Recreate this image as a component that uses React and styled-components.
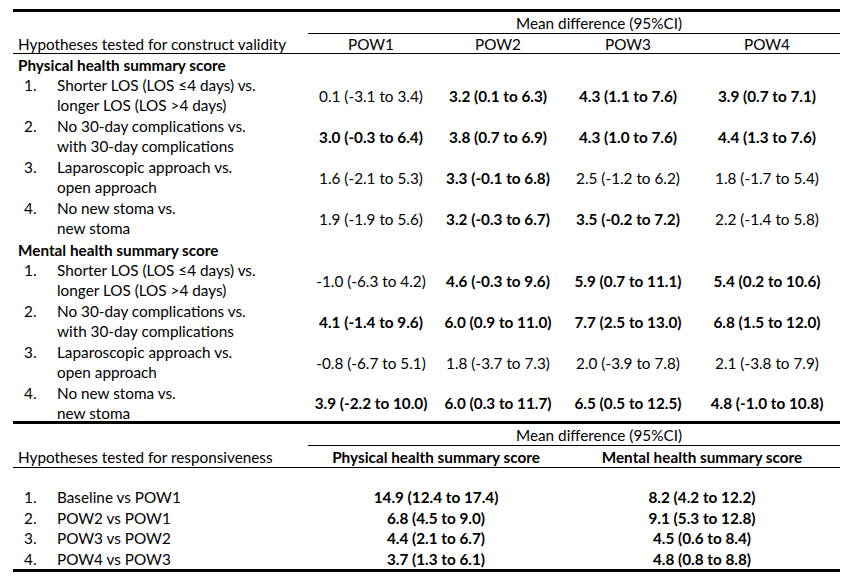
import React from "react";
import styled, { createGlobalStyle } from "styled-components";

const GlobalStyle = createGlobalStyle`
  html, body {
    margin: 0;
    padding: 0;
    background: #fff;
  }
  body {
    font-family: Lato, "Open Sans", sans-serif;
    font-size: 15.3px;
    color: #000;
  }
`;

const Page = styled.div`
  padding: 9px 20px 0 13px;
  width: 827px;
`;

const Section = styled.section`
  border-top: 3px solid #000;
  border-bottom: ${(p) => (p.$last ? "3px solid #000" : "none")};
`;

const Row = styled.div`
  display: grid;
  grid-template-columns: ${(p) => p.$cols};
  height: ${(p) => p.$h || 20}px;
  box-sizing: border-box;
  border-bottom: ${(p) => (p.$rule ? "1px solid #000" : "none")};
`;

const Cell = styled.div`
  display: flex;
  align-items: ${(p) => (p.$top ? "flex-start" : "center")};
  justify-content: ${(p) => (p.$left ? "flex-start" : "center")};
  padding-left: ${(p) => p.$pad || 0}px;
  grid-column: span ${(p) => p.$span || 1};
  box-sizing: border-box;
  line-height: 20px;
  white-space: nowrap;
  font-weight: ${(p) => (p.$bold ? 700 : 400)};
  border-bottom: ${(p) => (p.$rule ? "1px solid #000" : "none")};
`;

const Num = styled.span`
  width: 33px;
  flex: none;
`;

const Lines = styled.span`
  display: flex;
  flex-direction: column;
`;

const COLS_A = "295px 126px 128px 132px 146px";
const COLS_B = "295px 256px 276px";

const construct = [
  {
    title: "Physical health summary score",
    rows: [
      ["Shorter LOS (LOS \u22644 days) vs.", "longer LOS (LOS >4 days)", [
        ["0.1 (-3.1 to 3.4)", 0], ["3.2 (0.1 to 6.3)", 1], ["4.3 (1.1 to 7.6)", 1], ["3.9 (0.7 to 7.1)", 1]]],
      ["No 30-day complications vs.", "with 30-day complications", [
        ["3.0 (-0.3 to 6.4)", 1], ["3.8 (0.7 to 6.9)", 1], ["4.3 (1.0 to 7.6)", 1], ["4.4 (1.3 to 7.6)", 1]]],
      ["Laparoscopic approach vs.", "open approach", [
        ["1.6 (-2.1 to 5.3)", 0], ["3.3 (-0.1 to 6.8)", 1], ["2.5 (-1.2 to 6.2)", 0], ["1.8 (-1.7 to 5.4)", 0]]],
      ["No new stoma vs.", "new stoma", [
        ["1.9 (-1.9 to 5.6)", 0], ["3.2 (-0.3 to 6.7)", 1], ["3.5 (-0.2 to 7.2)", 1], ["2.2 (-1.4 to 5.8)", 0]]],
    ],
  },
  {
    title: "Mental health summary score",
    rows: [
      ["Shorter LOS (LOS \u22644 days) vs.", "longer LOS (LOS >4 days)", [
        ["-1.0 (-6.3 to 4.2)", 0], ["4.6 (-0.3 to 9.6)", 1], ["5.9 (0.7 to 11.1)", 1], ["5.4 (0.2 to 10.6)", 1]]],
      ["No 30-day complications vs.", "with 30-day complications", [
        ["4.1 (-1.4 to 9.6)", 1], ["6.0 (0.9 to 11.0)", 1], ["7.7 (2.5 to 13.0)", 1], ["6.8 (1.5 to 12.0)", 1]]],
      ["Laparoscopic approach vs.", "open approach", [
        ["-0.8 (-6.7 to 5.1)", 0], ["1.8 (-3.7 to 7.3)", 0], ["2.0 (-3.9 to 7.8)", 0], ["2.1 (-3.8 to 7.9)", 0]]],
      ["No new stoma vs.", "new stoma", [
        ["3.9 (-2.2 to 10.0)", 1], ["6.0 (0.3 to 11.7)", 1], ["6.5 (0.5 to 12.5)", 1], ["4.8 (-1.0 to 10.8)", 1]]],
    ],
  },
];

const responsiveness = [
  ["Baseline vs POW1", "14.9 (12.4 to 17.4)", "8.2 (4.2 to 12.2)"],
  ["POW2 vs POW1", "6.8 (4.5 to 9.0)", "9.1 (5.3 to 12.8)"],
  ["POW3 vs POW2", "4.4 (2.1 to 6.7)", "4.5 (0.6 to 8.4)"],
  ["POW4 vs POW3", "3.7 (1.3 to 6.1)", "4.8 (0.8 to 8.8)"],
];

const ConstructTable = () => (
  <Section>
    <Row $cols={COLS_A} $h={22}>
      <Cell />
      <Cell $span={4} $rule $pad={50}>
        Mean difference (95%CI)
      </Cell>
    </Row>
    <Row $cols={COLS_A} $h={20} $rule>
      <Cell $left $pad={5}>
        Hypotheses tested for construct validity
      </Cell>
      {["POW1", "POW2", "POW3", "POW4"].map((p) => (
        <Cell key={p}>{p}</Cell>
      ))}
    </Row>
    {construct.map((group, g) => (
      <React.Fragment key={group.title}>
        <Row $cols={COLS_A} $h={21}>
          <Cell $span={5} $left $pad={5} $bold>
            {group.title}
          </Cell>
        </Row>
        {group.rows.map(([a, b, vals], i) => (
          <Row key={a + i} $cols={COLS_A} $h={g === 1 && i === 3 ? 38 : 41}>
            <Cell $left $top $pad={11}>
              <Num>{i + 1}.</Num>
              <Lines>
                <span>{a}</span>
                <span>{b}</span>
              </Lines>
            </Cell>
            {vals.map(([v, bold], j) => (
              <Cell key={j} $bold={bold}>
                {v}
              </Cell>
            ))}
          </Row>
        ))}
      </React.Fragment>
    ))}
  </Section>
);

const ResponsivenessTable = () => (
  <Section $last>
    <Row $cols={COLS_B} $h={22}>
      <Cell />
      <Cell $span={2} $rule $pad={50}>
        Mean difference (95%CI)
      </Cell>
    </Row>
    <Row $cols={COLS_B} $h={22} $rule>
      <Cell $left $pad={5}>
        Hypotheses tested for responsiveness
      </Cell>
      <Cell $bold>Physical health summary score</Cell>
      <Cell $bold>Mental health summary score</Cell>
    </Row>
    <Row $cols={COLS_B} $h={19} />
    {responsiveness.map(([label, phys, ment], i) => (
      <Row key={label} $cols={COLS_B} $h={20.5}>
        <Cell $left $pad={11}>
          <Num>{i + 1}.</Num>
          <span>{label}</span>
        </Cell>
        <Cell $bold>{phys}</Cell>
        <Cell $bold>{ment}</Cell>
      </Row>
    ))}
  </Section>
);

export default function App() {
  return (
    <>
      <GlobalStyle />
      <Page>
        <ConstructTable />
        <ResponsivenessTable />
      </Page>
    </>
  );
}
